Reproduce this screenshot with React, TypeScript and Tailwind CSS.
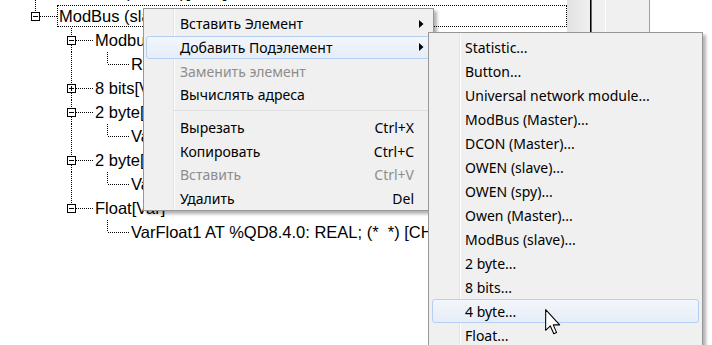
import React from 'react';

type Row = {
  level: number;
  text: string;
  box?: 'minus' | 'plus';
  last: boolean;
  anc: boolean[];
  selected?: boolean;
};

const rows: Row[] = [
  { level: 0, text: 'ModBus (Master)[VAR]', last: false, anc: [] },
  { level: 0, text: 'ModBus (slave)[VAR]', box: 'minus', last: true, anc: [], selected: true },
  { level: 1, text: 'Modbus (slave)[VAR]', box: 'minus', last: false, anc: [false] },
  { level: 2, text: 'RegWord AT %QW8.0.0: WORD;', last: true, anc: [false, true] },
  { level: 1, text: '8 bits[VAR]', box: 'plus', last: false, anc: [false] },
  { level: 1, text: '2 byte[VAR]', box: 'minus', last: false, anc: [false] },
  { level: 2, text: 'VarWord1 AT %QW8.2.0: WORD;', last: true, anc: [false, true] },
  { level: 1, text: '2 byte[VAR]', box: 'minus', last: false, anc: [false] },
  { level: 2, text: 'VarWord2 AT %QW8.3.0: WORD;', last: true, anc: [false, true] },
  { level: 1, text: 'Float[Var]', box: 'minus', last: true, anc: [false] },
  { level: 2, text: 'VarFloat1 AT %QD8.4.0: REAL; (*  *) [CHANNEL]', last: true, anc: [false, false] },
];

function TreeRow({ row }: { row: Row }) {
  const w = 57 + 36 * row.level;
  const px = 35 + 36 * row.level;
  const cx = px + 0.5;
  return (
    <div className="flex h-6">
      <svg width={w} height={24} className="shrink-0">
        <g stroke="#000" strokeWidth={1} strokeDasharray="1 1" fill="none">
          {row.anc.map((on, i) =>
            on ? <line key={i} x1={35 + 36 * i + 0.5} y1={0} x2={35 + 36 * i + 0.5} y2={24} /> : null
          )}
          <line x1={cx} y1={0} x2={cx} y2={row.box ? 8 : 12} />
          {!row.last && <line x1={cx} y1={row.box ? 17 : 12} x2={cx} y2={24} />}
          <line x1={row.box ? px + 5 : px + 1} y1={12.5} x2={w} y2={12.5} />
        </g>
        {row.box && (
          <g stroke="#000" strokeWidth={1} fill="#fff">
            <rect x={cx - 4} y={8.5} width={8} height={8} />
            <line x1={px - 2} y1={12.5} x2={px + 3} y2={12.5} />
            {row.box === 'plus' && <line x1={cx} y1={10} x2={cx} y2={15} />}
          </g>
        )}
      </svg>
      {row.selected ? (
        <div className="my-px flex flex-1 items-center border border-dotted border-black pl-px">
          {row.text}
        </div>
      ) : (
        <div className="flex items-center pl-[2px]">{row.text}</div>
      )}
    </div>
  );
}

type Item = {
  label: string;
  shortcut?: string;
  sub?: boolean;
  disabled?: boolean;
  active?: boolean;
  sep?: boolean;
};

const mainItems: Item[] = [
  { label: 'Вставить Элемент', sub: true },
  { label: 'Добавить Подэлемент', sub: true, active: true },
  { label: 'Заменить элемент', disabled: true },
  { label: 'Вычислять адреса' },
  { label: '', sep: true },
  { label: 'Вырезать', shortcut: 'Ctrl+X' },
  { label: 'Копировать', shortcut: 'Ctrl+C' },
  { label: 'Вставить', shortcut: 'Ctrl+V', disabled: true },
  { label: 'Удалить', shortcut: 'Del' },
];

const subItems = [
  'Statistic...',
  'Button...',
  'Universal network module...',
  'ModBus (Master)...',
  'DCON (Master)...',
  'OWEN (slave)...',
  'OWEN (spy)...',
  'Owen (Master)...',
  'ModBus (slave)...',
  '2 byte...',
  '8 bits...',
  '4 byte...',
  'Float...',
];

const itemBase = 'flex items-center rounded-[3px] border';
const activeCls = 'border-[#b4d0f2] bg-gradient-to-b from-[#f3f6fb] to-[#e6edf8]';

function Arrow() {
  return (
    <svg width={5} height={8} viewBox="0 0 5 8">
      <path d="M0 0 L4.5 4 L0 8 Z" fill="#000" />
    </svg>
  );
}

function Cursor() {
  return (
    <svg width={18} height={26} viewBox="0 0 12 19.5">
      <path
        d="M0.5 0.5 L0.5 16 L4 12.7 L6.6 18.6 L8.7 17.7 L6.2 11.9 L11 11.9 Z"
        fill="#fff"
        stroke="#000"
        strokeWidth={0.8}
        strokeLinejoin="round"
      />
    </svg>
  );
}

export default function App() {
  return (
    <div className="relative h-[345px] w-[712px] overflow-hidden bg-white">
      <div className="flex h-full">
        <div className="w-[567px] shrink-0 overflow-hidden whitespace-pre font-['Liberation_Sans',Arial,sans-serif] text-[16.5px] text-black">
          <div className="-mt-[20px]">
            {rows.map((r, i) => (
              <TreeRow key={i} row={r} />
            ))}
          </div>
        </div>
        <div className="flex h-full shrink-0">
          <div className="w-[23px] bg-gradient-to-r from-[#e2e2e2] to-[#f0f0f0]" />
          <div className="w-px bg-black" />
          <div className="w-px bg-[#6a6a6a]" />
          <div className="w-[13px] bg-[#f0f0f0]" />
          <div className="w-px bg-white" />
          <div className="w-[43px] bg-[#f0f0f0]" />
          <div className="w-px bg-[#a0a0a0]" />
        </div>
        <div className="flex-1 bg-white" />
      </div>

      {/* context menu */}
      <div className="absolute left-[143px] top-[8px] w-[291px] border border-[#979797] bg-[linear-gradient(to_right,#f0f0f0_29px,#e2e3e3_29px,#e2e3e3_30px,#fff_30px,#fff_31px,#f0f0f0_31px)] pt-[3px] font-['Noto_Sans',sans-serif] text-[14px] text-black shadow-[3px_3px_3px_rgba(0,0,0,0.3)]">
        {mainItems.map((it, i) =>
          it.sep ? (
            <div key={i} className="flex h-[9px] items-center pl-[29px] pr-[4px]">
              <div className="h-[2px] flex-1 border-t border-[#e0e0e0] border-b-white" />
            </div>
          ) : (
            <div
              key={i}
              className={`${itemBase} mx-[2px] h-[23.67px] pl-[33px] ${it.active ? activeCls : 'border-transparent'} ${it.disabled ? 'text-[#8d8d8d]' : ''}`}
            >
              <span className="flex-1">{it.label}</span>
              {it.shortcut && <span>{it.shortcut}</span>}
              <span className="flex w-[16px] items-center pl-[5px]">{it.sub && <Arrow />}</span>
            </div>
          )
        )}
      </div>

      {/* submenu */}
      <div className="absolute left-[428px] top-[32px] w-[275px] border border-[#979797] bg-[linear-gradient(to_right,#f0f0f0_30px,#e2e3e3_30px,#e2e3e3_31px,#fff_31px,#fff_32px,#f0f0f0_32px)] pt-[2px] font-['Noto_Sans',sans-serif] text-[14px] text-black shadow-[3px_3px_3px_rgba(0,0,0,0.3)]">
        {subItems.map((s, i) => (
          <div
            key={i}
            className={`${itemBase} mx-[3px] h-6 pl-[32px] ${s === '4 byte...' ? activeCls : 'border-transparent'}`}
          >
            {s}
          </div>
        ))}
      </div>

      <div className="absolute left-[544px] top-[309px]">
        <Cursor />
      </div>
    </div>
  );
}
